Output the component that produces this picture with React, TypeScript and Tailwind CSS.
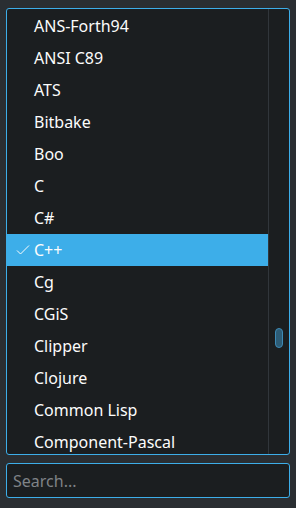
import { useState } from 'react';

const languages = [
  'ANS-Forth94',
  'ANSI C89',
  'ATS',
  'Bitbake',
  'Boo',
  'C',
  'C#',
  'C++',
  'Cg',
  'CGiS',
  'Clipper',
  'Clojure',
  'Common Lisp',
  'Component-Pascal',
];

export default function App() {
  const [selected, setSelected] = useState('C++');
  const [query, setQuery] = useState('');

  return (
    <div className="w-[296px] h-[508px] bg-[#2a2e32] flex flex-col px-[6px] pt-[8px] font-['Noto_Sans',sans-serif]">
      {/* List */}
      <div className="h-[447px] border border-[#3daee9] rounded-[3px] bg-[#1b1e20] flex overflow-hidden">
        <div className="flex-1 pt-[1px] overflow-hidden">
          {languages.map((lang) => {
            const active = lang === selected;
            return (
              <div
                key={lang}
                onClick={() => setSelected(lang)}
                className={`h-[32px] flex items-center text-[16px] text-[#fcfcfc] ${active ? 'bg-[#3daee9]' : ''}`}
              >
                <span className="w-[27px] flex justify-center pl-[4px]">
                  {active && (
                    <svg width="14" height="12" viewBox="0 0 14 12" fill="none">
                      <path d="M1 6.5 L4.5 10 L13 1.5" stroke="#fcfcfc" strokeWidth="1" />
                    </svg>
                  )}
                </span>
                <span>{lang}</span>
              </div>
            );
          })}
        </div>
        {/* Scrollbar */}
        <div className="w-[21px] border-l border-[#31363b] flex justify-center pt-[319px]">
          <div className="w-[8px] h-[20px] rounded-full bg-[#2d5c76] border border-[#3d8ab5]" />
        </div>
      </div>

      {/* Search */}
      <div className="mt-[8px] h-[35px] border border-[#3daee9] rounded-[3px] bg-[#1b1e20] flex items-center px-[6px]">
        <input
          value={query}
          onChange={(e) => setQuery(e.target.value)}
          placeholder="Search..."
          className="w-full bg-transparent outline-none text-[16px] text-[#fcfcfc] placeholder:text-[#7f8387]"
        />
      </div>
    </div>
  );
}
